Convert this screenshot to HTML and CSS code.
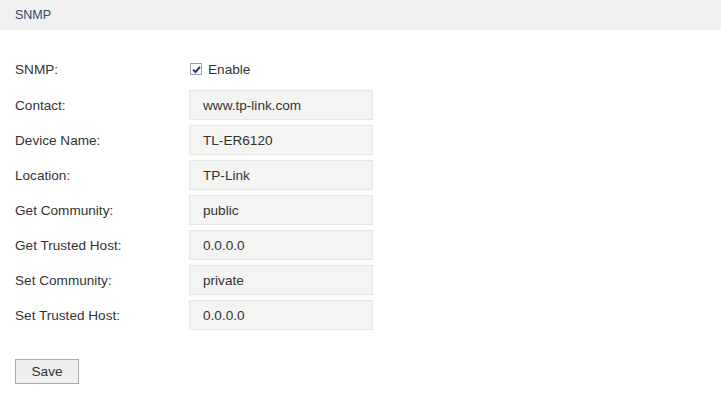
FILE: index.html
```html
<!DOCTYPE html>
<html lang="en">
<head>
    <meta charset="UTF-8">
    <title>SNMP</title>
    <link rel="stylesheet" href="styles.css">
</head>
<body>
    <div class="titulo">SNMP</div>

    <form class="formulario">
        <div class="linha linha-check">
            <label class="rotulo">SNMP:</label>
            <label class="check">
                <span class="caixa">
                    <svg width="9" height="9" viewBox="0 0 9 9"><path d="M1 4.6 L3.5 7 L8 1.8" fill="none" stroke="#1f3f6a" stroke-width="2"/></svg>
                </span>
                Enable
            </label>
        </div>
        <div class="linha">
            <label class="rotulo">Contact:</label>
            <input type="text" class="campo" value="www.tp-link.com">
        </div>
        <div class="linha">
            <label class="rotulo">Device Name:</label>
            <input type="text" class="campo" value="TL-ER6120">
        </div>
        <div class="linha">
            <label class="rotulo">Location:</label>
            <input type="text" class="campo" value="TP-Link">
        </div>
        <div class="linha">
            <label class="rotulo">Get Community:</label>
            <input type="text" class="campo" value="public">
        </div>
        <div class="linha">
            <label class="rotulo">Get Trusted Host:</label>
            <input type="text" class="campo" value="0.0.0.0">
        </div>
        <div class="linha">
            <label class="rotulo">Set Community:</label>
            <input type="text" class="campo" value="private">
        </div>
        <div class="linha">
            <label class="rotulo">Set Trusted Host:</label>
            <input type="text" class="campo" value="0.0.0.0">
        </div>

        <button type="button" class="botao">Save</button>
    </form>
</body>
</html>
```

FILE: styles.css
```css
body {
    font-family: "Liberation Sans", Arial, sans-serif;
    font-size: 13.6px;
    color: #333;
    background-color: #ffffff;
    margin: 0;
}

.titulo {
    height: 30px;
    line-height: 30px;
    padding-left: 15px;
    background-color: #f0f0f0;
    color: #2e4a66;
    font-size: 12.5px;
}

.formulario {
    padding: 24px 15px 0 15px;
}

.linha {
    display: flex;
    align-items: center;
    height: 30px;
    margin-bottom: 5px;
}

.linha-check {
    margin-bottom: 6px;
}

.rotulo {
    width: 174px;
}

.check {
    display: flex;
    align-items: center;
    gap: 6px;
    margin-left: 1px;
}

.caixa {
    display: flex;
    align-items: center;
    justify-content: center;
    width: 10px;
    height: 10px;
    border: 1px solid #a0a0a0;
    background-color: #fff;
}

.campo {
    box-sizing: border-box;
    width: 184px;
    height: 30px;
    padding: 0 13px;
    font-family: inherit;
    font-size: 13.6px;
    color: #333;
    background-color: #f4f4f2;
    border: 1px solid #e6e6e6;
    outline: none;
}

.botao {
    margin-top: 24px;
    width: 64px;
    height: 25px;
    font-family: inherit;
    font-size: 13.6px;
    color: #333;
    background-color: #efefef;
    border: 1px solid #aaa;
    cursor: pointer;
}
```
